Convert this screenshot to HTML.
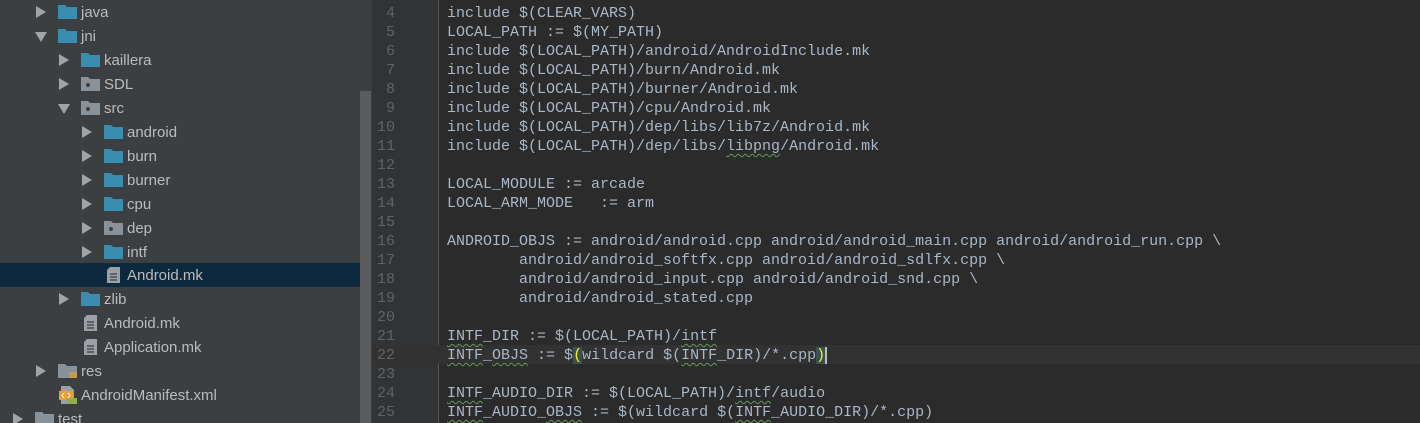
<!DOCTYPE html>
<html style="overflow:hidden"><head><style>
*{margin:0;padding:0;box-sizing:border-box}
html,body{width:1420px;height:423px;overflow:hidden}
body{background:#2b2b2b;position:relative;font-family:"Liberation Sans",sans-serif}
#side{position:absolute;left:0;top:0;width:372px;height:423px;background:#3c3f41;overflow:hidden}
#sb{position:absolute;left:360px;top:91px;width:11px;height:332px;background:#595b5d}
.row{position:absolute;left:0;width:372px;height:24px;color:#bbbbbb;font-size:15px;line-height:24px}
.row.sel{background:#0d293e;width:360px}
.row span{position:absolute;top:1px}
.arr{position:absolute;top:6px;width:0;height:0}
.ar{border-top:6px solid transparent;border-bottom:6px solid transparent;border-left:10px solid #a0a4a8}
.ad{border-left:6px solid transparent;border-right:6px solid transparent;border-top:10px solid #a0a4a8;top:8px}
.fold{position:absolute;top:5px;width:19px;height:14px}
#gut{position:absolute;left:372px;top:0;width:67px;height:423px;background:#313335;border-right:1px solid #555555}
.ln{position:absolute;left:370px;width:25px;text-align:right;color:#606366;font-family:"Liberation Mono",monospace;font-size:15px;height:19px;line-height:19px}
.code{position:absolute;left:447px;color:#a9b7c6;font-family:"Liberation Mono",monospace;font-size:15px;height:19px;line-height:19px;white-space:pre}
.cur{position:absolute;left:372px;width:1048px;top:345px;height:19px;background:#323232}
u{text-decoration:underline wavy #629755;text-decoration-thickness:1px;text-underline-offset:3px}
.br{background:#3b514d;color:#ffef28}
</style></head><body>
<div id="side">
<div class="row" style="top:0"><div class="arr ar" style="left:36px"></div><svg class="fold" style="left:58px" viewBox="0 0 19 14"><path d="M0 0h7l2 2h10v12H0z" fill="#3b8db0"/></svg><span style="left:81px">java</span></div>
<div class="row" style="top:24px"><div class="arr ad" style="left:35px"></div><svg class="fold" style="left:58px" viewBox="0 0 19 14"><path d="M0 0h7l2 2h10v12H0z" fill="#3b8db0"/></svg><span style="left:81px">jni</span></div>
<div class="row" style="top:48px"><div class="arr ar" style="left:59px"></div><svg class="fold" style="left:81px" viewBox="0 0 19 14"><path d="M0 0h7l2 2h10v12H0z" fill="#3b8db0"/></svg><span style="left:104px">kaillera</span></div>
<div class="row" style="top:72px"><div class="arr ar" style="left:59px"></div><svg class="fold" style="left:81px" viewBox="0 0 19 14"><path d="M0 0h7l2 2h10v12H0z" fill="#8a9299"/><circle cx="7" cy="8" r="2" fill="#3c3f41"/></svg><span style="left:104px">SDL</span></div>
<div class="row" style="top:96px"><div class="arr ad" style="left:58px"></div><svg class="fold" style="left:81px" viewBox="0 0 19 14"><path d="M0 0h7l2 2h10v12H0z" fill="#8a9299"/><circle cx="7" cy="8" r="2" fill="#3c3f41"/></svg><span style="left:104px">src</span></div>
<div class="row" style="top:120px"><div class="arr ar" style="left:82px"></div><svg class="fold" style="left:104px" viewBox="0 0 19 14"><path d="M0 0h7l2 2h10v12H0z" fill="#3b8db0"/></svg><span style="left:127px">android</span></div>
<div class="row" style="top:144px"><div class="arr ar" style="left:82px"></div><svg class="fold" style="left:104px" viewBox="0 0 19 14"><path d="M0 0h7l2 2h10v12H0z" fill="#3b8db0"/></svg><span style="left:127px">burn</span></div>
<div class="row" style="top:168px"><div class="arr ar" style="left:82px"></div><svg class="fold" style="left:104px" viewBox="0 0 19 14"><path d="M0 0h7l2 2h10v12H0z" fill="#3b8db0"/></svg><span style="left:127px">burner</span></div>
<div class="row" style="top:192px"><div class="arr ar" style="left:82px"></div><svg class="fold" style="left:104px" viewBox="0 0 19 14"><path d="M0 0h7l2 2h10v12H0z" fill="#3b8db0"/></svg><span style="left:127px">cpu</span></div>
<div class="row" style="top:216px"><div class="arr ar" style="left:82px"></div><svg class="fold" style="left:104px" viewBox="0 0 19 14"><path d="M0 0h7l2 2h10v12H0z" fill="#8a9299"/><circle cx="7" cy="8" r="2" fill="#3c3f41"/></svg><span style="left:127px">dep</span></div>
<div class="row" style="top:240px"><div class="arr ar" style="left:82px"></div><svg class="fold" style="left:104px" viewBox="0 0 19 14"><path d="M0 0h7l2 2h10v12H0z" fill="#3b8db0"/></svg><span style="left:127px">intf</span></div>
<div class="row sel" style="top:263px"><svg class="fold" style="left:107px;top:4px;width:13px;height:16px" viewBox="0 0 13 16"><path d="M3 0h10v16H0V3z" fill="#9aa0a6"/><path d="M3 7h7M3 10h7M3 13h7" stroke="#3c3f41" stroke-width="1.2"/></svg><span style="left:127px">Android.mk</span></div>
<div class="row" style="top:287px"><div class="arr ar" style="left:59px"></div><svg class="fold" style="left:81px" viewBox="0 0 19 14"><path d="M0 0h7l2 2h10v12H0z" fill="#3b8db0"/></svg><span style="left:104px">zlib</span></div>
<div class="row" style="top:311px"><svg class="fold" style="left:84px;top:4px;width:13px;height:16px" viewBox="0 0 13 16"><path d="M3 0h10v16H0V3z" fill="#9aa0a6"/><path d="M3 7h7M3 10h7M3 13h7" stroke="#3c3f41" stroke-width="1.2"/></svg><span style="left:104px">Android.mk</span></div>
<div class="row" style="top:335px"><svg class="fold" style="left:84px;top:4px;width:13px;height:16px" viewBox="0 0 13 16"><path d="M3 0h10v16H0V3z" fill="#9aa0a6"/><path d="M3 7h7M3 10h7M3 13h7" stroke="#3c3f41" stroke-width="1.2"/></svg><span style="left:104px">Application.mk</span></div>
<div class="row" style="top:359px"><div class="arr ar" style="left:36px"></div><svg class="fold" style="left:58px" viewBox="0 0 19 14"><path d="M0 0h7l2 2h10v12H0z" fill="#8a9299"/><path d="M11 9h8M11 11h8M11 13h8" stroke="#e0a030" stroke-width="1.2"/></svg><span style="left:81px">res</span></div>
<div class="row" style="top:383px"><svg class="fold" style="left:59px;top:3px;width:18px;height:18px" viewBox="0 0 18 18"><path d="M2 0h9l4 4v14H2z" fill="#9aa0a6"/><rect x="0" y="5" width="14" height="9" fill="#e8a030"/><path d="M5 7l-2 2.5 2 2.5M9 7l2 2.5-2 2.5" stroke="#fff" fill="none" stroke-width="1"/><rect x="8" y="12" width="10" height="6" fill="#8fb04a"/></svg><span style="left:81px">AndroidManifest.xml</span></div>
<div class="row" style="top:407px;height:16px;overflow:hidden"><div class="arr ar" style="left:13px"></div><svg class="fold" style="left:35px" viewBox="0 0 19 14"><path d="M0 0h7l2 2h10v12H0z" fill="#8a9299"/></svg><span style="left:58px">test</span></div>
<div id="sb"></div>
</div>
<div id="gut"></div>
<div class="cur"></div>
<div class="ln" style="top:4px">4</div><div class="ln" style="top:23px">5</div><div class="ln" style="top:42px">6</div><div class="ln" style="top:61px">7</div><div class="ln" style="top:80px">8</div><div class="ln" style="top:99px">9</div><div class="ln" style="top:118px">10</div><div class="ln" style="top:137px">11</div><div class="ln" style="top:156px">12</div><div class="ln" style="top:175px">13</div><div class="ln" style="top:194px">14</div><div class="ln" style="top:213px">15</div><div class="ln" style="top:232px">16</div><div class="ln" style="top:251px">17</div><div class="ln" style="top:270px">18</div><div class="ln" style="top:289px">19</div><div class="ln" style="top:308px">20</div><div class="ln" style="top:327px">21</div><div class="ln" style="top:346px">22</div><div class="ln" style="top:365px">23</div><div class="ln" style="top:384px">24</div><div class="ln" style="top:403px">25</div>
<div class="code" style="top:4px">include $(CLEAR_VARS)</div>
<div class="code" style="top:23px">LOCAL_PATH := $(MY_PATH)</div>
<div class="code" style="top:42px">include $(LOCAL_PATH)/android/AndroidInclude.mk</div>
<div class="code" style="top:61px">include $(LOCAL_PATH)/burn/Android.mk</div>
<div class="code" style="top:80px">include $(LOCAL_PATH)/burner/Android.mk</div>
<div class="code" style="top:99px">include $(LOCAL_PATH)/cpu/Android.mk</div>
<div class="code" style="top:118px">include $(LOCAL_PATH)/dep/libs/lib7z/Android.mk</div>
<div class="code" style="top:137px">include $(LOCAL_PATH)/dep/libs/<u>libpng</u>/Android.mk</div>
<div class="code" style="top:175px">LOCAL_MODULE := arcade</div>
<div class="code" style="top:194px">LOCAL_ARM_MODE   := arm</div>
<div class="code" style="top:232px">ANDROID_OBJS := android/android.cpp android/android_main.cpp android/android_run.cpp \</div>
<div class="code" style="top:251px">        android/android_softfx.cpp android/android_sdlfx.cpp \</div>
<div class="code" style="top:270px">        android/android_input.cpp android/android_snd.cpp \</div>
<div class="code" style="top:289px">        android/android_stated.cpp</div>
<div class="code" style="top:327px"><u>INTF</u>_DIR := $(LOCAL_PATH)/<u>intf</u></div>
<div class="code" style="top:346px"><u>INTF</u>_<u>OBJS</u> := $<span class="br">(</span>wildcard $(<u>INTF</u>_DIR)/*.cpp<span class="br">)</span><span style="border-left:2px solid #bbb"></span></div>
<div class="code" style="top:384px"><u>INTF</u>_AUDIO_DIR := $(LOCAL_PATH)/<u>intf</u>/audio</div>
<div class="code" style="top:403px;height:20px;overflow:hidden"><u>INTF</u>_AUDIO_<u>OBJS</u> := $(wildcard $(<u>INTF</u>_AUDIO_DIR)/*.cpp)</div>
</body></html>
